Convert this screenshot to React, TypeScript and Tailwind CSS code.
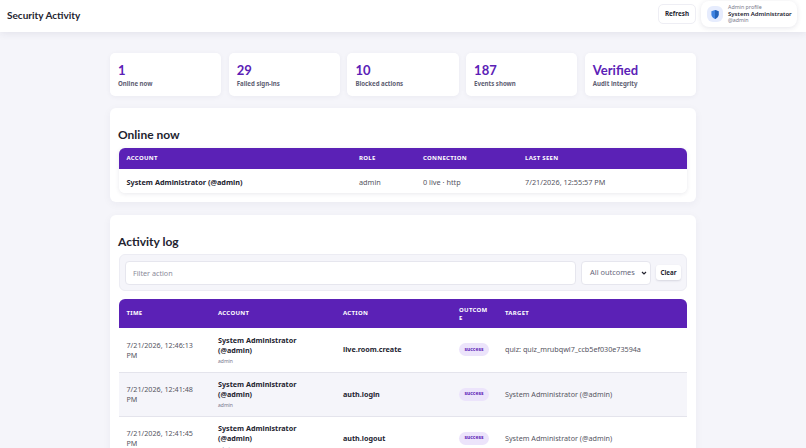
const STATS = [
  { value: '1', label: 'Online now' },
  { value: '29', label: 'Failed sign-ins' },
  { value: '10', label: 'Blocked actions' },
  { value: '187', label: 'Events shown' },
  { value: 'Verified', label: 'Audit integrity' },
]

const EVENTS = [
  { time: '7/21/2026, 12:46:13 PM', action: 'live.room.create', target: 'quiz: quiz_mrubqwl7_ccb5ef030e73594a' },
  { time: '7/21/2026, 12:41:48 PM', action: 'auth.login', target: 'System Administrator (@admin)' },
  { time: '7/21/2026, 12:41:45 PM', action: 'auth.logout', target: 'System Administrator (@admin)' },
]

export default function App() {
  return (
    <div className="h-screen overflow-hidden bg-[#f5f5fa] text-[#23232f] font-['Noto_Sans',sans-serif]">
      <header className="h-8 bg-white shadow-[0_1px_8px_rgba(40,40,80,0.1)] flex items-center justify-between pl-[7px] pr-[9px] relative">
        <h1 className="text-[10px] font-bold font-['Lato',sans-serif] mt-[-2px]">Security Activity</h1>
        <div className="flex items-center gap-[5px] mt-[-4px]">
          <button className="h-5 w-[38px] rounded-[5px] border border-[#eeeef4] bg-white text-[6.3px] font-bold">Refresh</button>
          <div className="h-[26px] w-[96px] rounded-lg bg-white shadow-[0_1px_5px_rgba(40,40,80,0.12)] flex items-center gap-[5px] pl-[6px]">
            <div className="w-[16px] h-[16px] rounded-md bg-[#e6ecfd] flex items-center justify-center shrink-0">
              <svg width="8" height="9" viewBox="0 0 8 9">
                <path d="M4 0 L7.6 1.3 V4.2 C7.6 6.6 5.8 8.2 4 9 C2.2 8.2 0.4 6.6 0.4 4.2 V1.3 Z" fill="#3f83e0" />
                <path d="M4 0 L7.6 1.3 V4.2 C7.6 6.6 5.8 8.2 4 9 Z" fill="#2563b8" />
              </svg>
            </div>
            <div className="whitespace-nowrap">
              <div className="text-[5.3px] leading-[6.5px] text-[#77778a]">Admin profile</div>
              <div className="text-[6px] leading-[6.5px] font-semibold">System Administrator</div>
              <div className="text-[5.3px] leading-[6.5px] text-[#77778a]">@admin</div>
            </div>
          </div>
        </div>
      </header>

      <main className="w-[586px] mx-auto pt-[21px]">
        <div className="grid grid-cols-5 gap-[7.5px]">
          {STATS.map((s) => (
            <div key={s.label} className="h-[43px] rounded-[5px] bg-white shadow-[0_1px_5px_rgba(40,40,80,0.05)] pl-2 pt-[9px]">
              <div className="text-[13px] leading-[16px] font-bold text-[#5b21b6] font-['Lato',sans-serif]">{s.value}</div>
              <div className="text-[6.1px] leading-[9px] font-bold text-[#5e5e72] mt-[1px]">{s.label}</div>
            </div>
          ))}
        </div>

        <section className="mt-3 h-[94px] rounded-md bg-white shadow-[0_2px_8px_rgba(40,40,80,0.05)] px-[9px] pt-[19px]">
          <h2 className="text-[12px] leading-[16px] font-bold font-['Lato',sans-serif] -ml-px">Online now</h2>
          <div className="mt-[5px] rounded-md overflow-hidden shadow-[0_1px_4px_rgba(40,40,80,0.1)]">
            <table className="w-full table-fixed text-left">
              <thead className="bg-[#5b21b6] text-white text-[6px] tracking-[0.3px]">
                <tr className="h-[21px]">
                  <th className="pl-[7.5px] font-bold w-[232px]">ACCOUNT</th>
                  <th className="pl-2 font-bold w-[64px]">ROLE</th>
                  <th className="pl-2 font-bold w-[102px]">CONNECTION</th>
                  <th className="pl-2 font-bold">LAST SEEN</th>
                </tr>
              </thead>
              <tbody className="text-[7.3px]">
                <tr className="h-[24px] bg-white">
                  <td className="pl-[7.5px] pt-[2px] font-bold">System Administrator (@admin)</td>
                  <td className="pl-2 pt-[2px] text-[#55555f]">admin</td>
                  <td className="pl-2 pt-[2px] text-[#55555f]">0 live · http</td>
                  <td className="pl-2 pt-[2px] text-[#55555f]">7/21/2026, 12:55:57 PM</td>
                </tr>
              </tbody>
            </table>
          </div>
        </section>

        <section className="mt-[13px] rounded-md bg-white shadow-[0_2px_8px_rgba(40,40,80,0.05)] px-[9px] pt-[19px]">
          <h2 className="text-[12px] leading-[16px] font-bold font-['Lato',sans-serif] -ml-px">Activity log</h2>
          <div className="mt-[4px] h-[37px] rounded-md bg-[#f5f5fa] border border-[#ececf3] flex items-center gap-[5px] pl-[5px] pr-[5px]">
            <input
              placeholder="Filter action"
              className="flex-1 min-w-0 h-[24px] rounded-[4px] bg-white border border-[#e6e6ee] px-[7px] text-[7.2px] placeholder:text-[#8a8a99]"
            />
            <div className="w-[70px] h-[24px] rounded-[4px] bg-white border border-[#e6e6ee] flex items-center justify-between pl-2 pr-[3px] text-[7.4px] text-[#66667a]">
              All outcomes
              <svg width="6" height="6" viewBox="0 0 6 6">
                <path d="M1 2 L3 4 L5 2" fill="none" stroke="#23232f" strokeWidth="1.2" />
              </svg>
            </div>
            <button className="w-[25px] h-[15px] rounded-[3px] bg-white shadow-[0_1px_2px_rgba(40,40,80,0.15)] text-[6.2px] font-bold">Clear</button>
          </div>
          <div className="mt-2 rounded-t-md overflow-hidden">
            <table className="w-full table-fixed text-left">
              <thead className="bg-[#5b21b6] text-white text-[6px] tracking-[0.3px]">
                <tr className="h-[29px]">
                  <th className="pl-[7.5px] font-bold w-[91px]">TIME</th>
                  <th className="pl-2 font-bold w-[125px]">ACCOUNT</th>
                  <th className="pl-2 font-bold w-[116px]">ACTION</th>
                  <th className="pl-2 pr-2 font-bold w-[46px] break-all leading-[8px]">OUTCOME</th>
                  <th className="pl-2 font-bold">TARGET</th>
                </tr>
              </thead>
              <tbody className="text-[7.2px]">
                {EVENTS.map((e, i) => (
                  <tr key={e.time} className={`h-[44px] border-b border-[#e4e4ec] ${i % 2 === 1 ? 'bg-[#f5f5fa]' : 'bg-white'}`}>
                    <td className="pl-[7.5px] pr-2 text-[#55555f] leading-[10px]">{e.time}</td>
                    <td className="pl-2 pr-2">
                      <div className="font-bold leading-[10px]">System Administrator (@admin)</div>
                      <div className="text-[5px] leading-[8px] text-[#77778a] mt-[2px]">admin</div>
                    </td>
                    <td className="pl-2 font-bold">{e.action}</td>
                    <td className="pl-2">
                      <span className="inline-flex items-center justify-center w-[30px] h-[13px] rounded-full bg-[#ece4fb] text-[#5b21b6] text-[5px] font-bold">success</span>
                    </td>
                    <td className="pl-2 text-[#55555f]">{e.target}</td>
                  </tr>
                ))}
              </tbody>
            </table>
          </div>
        </section>
      </main>
    </div>
  )
}
